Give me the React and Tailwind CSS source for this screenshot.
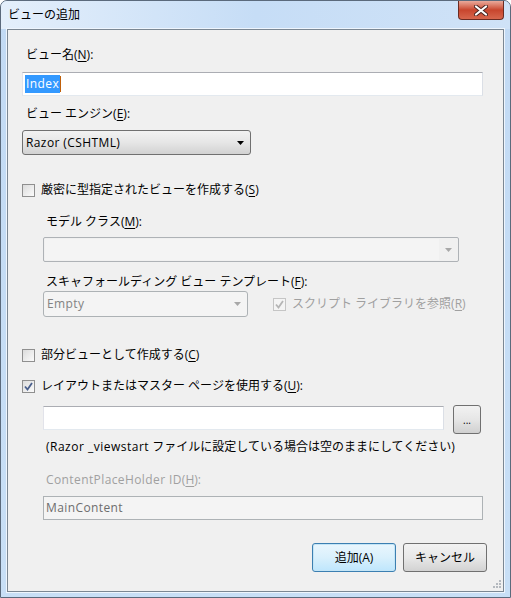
import React from "react";

const font = { fontFamily: '"Open Sans", "Noto Sans CJK JP", sans-serif' };

function U({ children }) {
    return <span className="underline underline-offset-[2px]">{children}</span>;
}

function Check({ checked, disabled }) {
    return (
        <span className={"flex h-[13px] w-[13px] shrink-0 items-center justify-center border " + (disabled ? "border-[#c5c5c5] bg-[#f4f4f4]" : "border-[#8f8f8f] bg-gradient-to-br from-[#dcdcdc] to-[#fbfbfb]")}>
            {checked && (
                <svg width="9" height="9" viewBox="0 0 9 9">
                    <path d="M1 4.5 L3.5 7.5 L8 1" fill="none" stroke={disabled ? "#b5b5b5" : "#4a5f8c"} strokeWidth="1.8" />
                </svg>
            )}
        </span>
    );
}

function Arrow({ color }) {
    return (
        <svg width="7" height="4" viewBox="0 0 7 4">
            <path d="M0 0 H7 L3.5 4 Z" fill={color} />
        </svg>
    );
}

export default function App() {
    return (
        <div style={font} className="flex h-[598px] w-[511px] flex-col overflow-hidden rounded-t-[7px] border border-[#5b6a7c] bg-gradient-to-b from-[#c2daf4] to-[#c8dff6] text-[12px] leading-[16px] text-black">
            {/* title bar */}
            <div className="flex h-[28px] shrink-0 items-start justify-between bg-gradient-to-r from-[#e4effb] via-[#c6ddf6] to-[#cfe2f7]">
                <div className="ml-[7px] mt-[6px] text-[12px] leading-[16px]">ビューの追加</div>
                <div className="mr-[6px] flex h-[19px] w-[46px] items-center justify-center rounded-b-[4px] border border-t-0 border-[#6b2b22] bg-gradient-to-b from-[#e9a99b] via-[#c8452d] to-[#d7664d]">
                    <svg width="14" height="11" viewBox="0 0 14 11">
                        <path d="M2 1.5 L12 9.5 M12 1.5 L2 9.5" stroke="#4a2420" strokeWidth="4" strokeLinecap="round" />
                        <path d="M2 1.5 L12 9.5 M12 1.5 L2 9.5" stroke="#ffffff" strokeWidth="2.2" strokeLinecap="round" />
                    </svg>
                </div>
            </div>

            {/* client area */}
            <div className="relative mx-[6px] mb-[5px] flex flex-1 flex-col border border-[#7b8793] bg-[#f0f0f0] shadow-[0_0_0_1px_#eef5fd]">
                <div className="ml-[18px] mt-[17px] h-[16px]">ビュー名(<U>N</U>):</div>
                <div className="ml-[14px] mt-[9px] flex h-[24px] w-[461px] items-center border border-[#abadb3] border-b-[#e3e9ef] border-l-[#e2e3ea] border-r-[#dbdfe6] bg-white px-[2px]">
                    <span className="bg-[#3399ff] px-[1px] leading-[18px] tracking-[0.4px] text-white">Index</span>
                    <span className="h-[16px] w-[1px] bg-[#c0600a]" />
                </div>

                <div className="ml-[18px] mt-[10px] h-[16px]">ビュー エンジン(<U>E</U>):</div>
                <div className="ml-[14px] mt-[8px] flex h-[25px] w-[229px] items-center justify-between rounded-[3px] border border-[#707070] bg-gradient-to-b from-[#f2f2f2] via-[#e6e6e6] to-[#d2d2d2] pl-[3px] pr-[6px]">
                    <span className="tracking-[0.4px]">Razor (CSHTML)</span>
                    <Arrow color="#000" />
                </div>

                <div className="ml-[14px] mt-[27px] flex h-[16px] items-center gap-[6px]">
                    <Check />
                    <span>厳密に型指定されたビューを作成する(<U>S</U>)</span>
                </div>

                <div className="ml-[38px] mt-[16px] h-[16px]">モデル クラス(<U>M</U>):</div>
                <div className="ml-[35px] mt-[7px] flex h-[25px] w-[416px] items-center rounded-[2px] border border-[#aeb2b6] bg-[#f0f0f0]">
                    <div className="ml-[1px] h-[21px] flex-1 bg-[#f4f4f4]" />
                    <div className="flex w-[19px] justify-center">
                        <Arrow color="#a8a8a8" />
                    </div>
                </div>

                <div className="ml-[38px] mt-[12px] h-[16px]">スキャフォールディング ビュー テンプレート(<U>F</U>):</div>
                <div className="ml-[35px] mt-[1px] flex h-[26px] items-center">
                    <div className="flex h-[26px] w-[205px] items-center justify-between rounded-[3px] border border-[#adb2b5] bg-[#f4f4f4] pl-[3px] pr-[6px] text-[#838383]">
                        <span className="tracking-[0.4px]">Empty</span>
                        <Arrow color="#a8a8a8" />
                    </div>
                    <div className="ml-[25px] flex items-center gap-[6px] text-[#a0a0a0]">
                        <Check checked disabled />
                        <span>スクリプト ライブラリを参照(<U>R</U>)</span>
                    </div>
                </div>

                <div className="ml-[14px] mt-[30px] flex h-[16px] items-center gap-[6px]">
                    <Check />
                    <span>部分ビューとして作成する(<U>C</U>)</span>
                </div>
                <div className="ml-[14px] mt-[15px] flex h-[16px] items-center gap-[6px]">
                    <Check checked />
                    <span>レイアウトまたはマスター ページを使用する(<U>U</U>):</span>
                </div>

                <div className="ml-[35px] mt-[11px] flex h-[29px] items-start">
                    <div className="mt-[1px] h-[24px] w-[401px] border border-[#abadb3] border-b-[#e3e9ef] border-l-[#e2e3ea] border-r-[#dbdfe6] bg-white" />
                    <div className="ml-[9px] flex h-[29px] w-[28px] items-center justify-center rounded-[3px] border border-[#707070] bg-gradient-to-b from-[#f2f2f2] via-[#e6e6e6] to-[#d0d0d0] text-[10px] leading-[10px]">
                        ...
                    </div>
                </div>

                <div className="ml-[38px] mt-[5px] h-[16px] whitespace-nowrap">
                    <span className="tracking-[0.5px]">(Razor _viewstart</span> ファイルに設定している場合は空のままにしてください)
                </div>

                <div className="ml-[38px] mt-[17px] h-[16px] text-[#a0a0a0]">
                    <span className="tracking-[0.4px]">ContentPlaceHolder ID</span>(<U>H</U>):
                </div>
                <div className="ml-[35px] mt-[8px] flex h-[24px] w-[440px] items-center border border-[#adb2b5] bg-[#f4f4f4] px-[2px] tracking-[0.4px] text-[#6d6d6d]">
                    MainContent
                </div>

                <div className="mt-[23px] flex h-[29px] justify-end gap-[7px] pr-[16px]">
                    <div className="flex w-[84px] items-center justify-center rounded-[3px] border border-[#3c7fb1] bg-gradient-to-b from-[#eaf6fd] via-[#d9f0fc] to-[#bee6fd] shadow-[inset_0_0_0_1px_#c4e5f6]">
                        追加(A)
                    </div>
                    <div className="flex w-[84px] items-center justify-center rounded-[3px] border border-[#707070] bg-gradient-to-b from-[#f2f2f2] via-[#e8e8e8] to-[#d2d2d2]">
                        キャンセル
                    </div>
                </div>

                {/* resize grip */}
                <svg className="absolute bottom-[2px] right-[2px]" width="10" height="10" viewBox="0 0 10 10">
                    {[[8, 0], [8, 3], [5, 3], [8, 6], [5, 6], [2, 6]].map(([x, y], i) => (
                        <rect key={i} x={x} y={y + 1} width="2" height="2" fill="#b4b9bf" />
                    ))}
                </svg>
            </div>
        </div>
    );
}
